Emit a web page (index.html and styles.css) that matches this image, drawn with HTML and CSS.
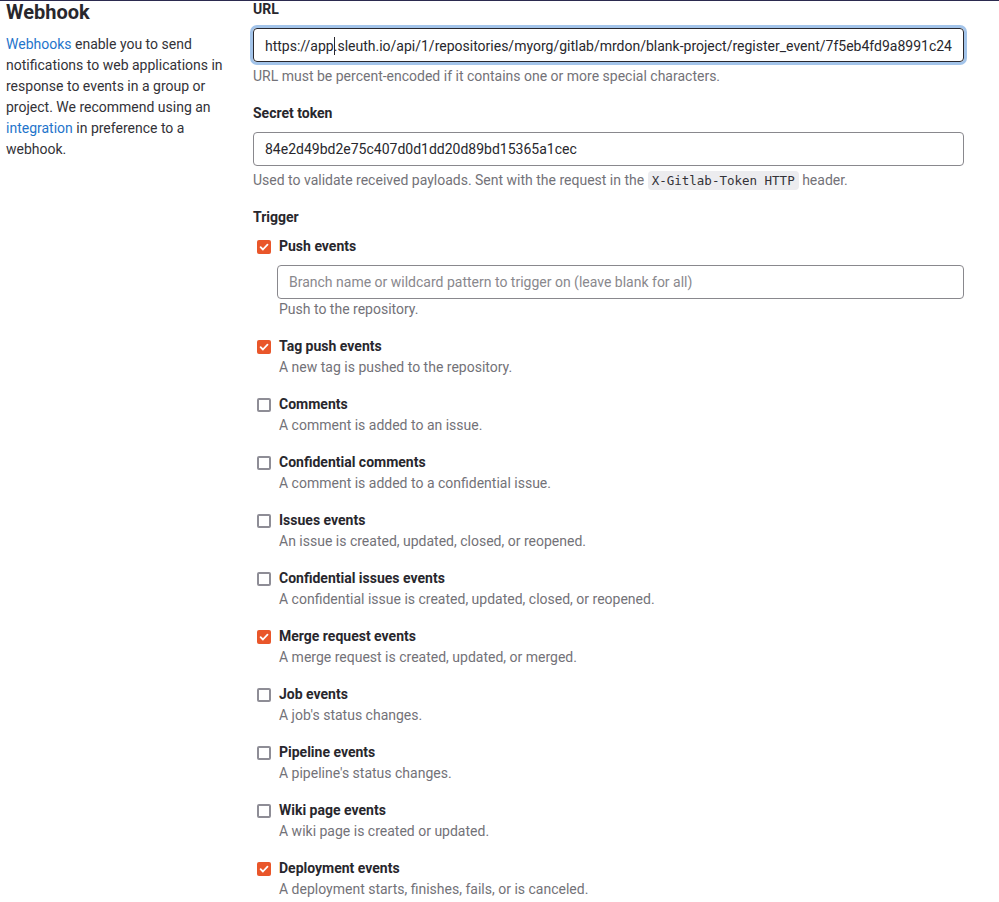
FILE: index.html
```html
<!DOCTYPE html>
<html lang="en">
<head>
<meta charset="utf-8">
<title>Webhook</title>
<link rel="stylesheet" href="styles.css">
</head>
<body>
<div class="topline"></div>
<main class="layout">
  <aside class="intro">
    <h2 class="intro-title">Webhook</h2>
    <p class="intro-text"><a href="#" class="link">Webhooks</a> enable you to send notifications to web applications in response to events in a group or project. We recommend using an <a href="#" class="link">integration</a> in preference to a webhook.</p>
  </aside>
  <section class="form">
    <div class="group">
      <label class="label">URL</label>
      <div class="input input-focus">https://app<span class="caret"></span>.sleuth.io/api/1/repositories/myorg/gitlab/mrdon/blank-project/register_event/7f5eb4fd9a8991c24</div>
      <p class="help">URL must be percent-encoded if it contains one or more special characters.</p>
    </div>
    <div class="group">
      <label class="label">Secret token</label>
      <div class="input">84e2d49bd2e75c407d0d1dd20d89bd15365a1cec</div>
      <p class="help">Used to validate received payloads. Sent with the request in the <code class="code">X-Gitlab-Token HTTP</code> header.</p>
    </div>
    <div class="group">
      <label class="label">Trigger</label>
      <ul class="triggers">
        <li class="trigger">
          <span class="box checked"><svg viewBox="0 0 14 14" width="14" height="14"><path d="M3.6 7.2l2.3 2.3 4.6-4.8" fill="none" stroke="#fff" stroke-width="1.8" stroke-linecap="round" stroke-linejoin="round"/></svg></span>
          <div class="trigger-body">
            <div class="trigger-name">Push events</div>
            <div class="input input-branch placeholder">Branch name or wildcard pattern to trigger on (leave blank for all)</div>
            <div class="trigger-desc">Push to the repository.</div>
          </div>
        </li>
        <li class="trigger">
          <span class="box checked"><svg viewBox="0 0 14 14" width="14" height="14"><path d="M3.6 7.2l2.3 2.3 4.6-4.8" fill="none" stroke="#fff" stroke-width="1.8" stroke-linecap="round" stroke-linejoin="round"/></svg></span>
          <div class="trigger-body">
            <div class="trigger-name">Tag push events</div>
            <div class="trigger-desc">A new tag is pushed to the repository.</div>
          </div>
        </li>
        <li class="trigger">
          <span class="box"></span>
          <div class="trigger-body">
            <div class="trigger-name">Comments</div>
            <div class="trigger-desc">A comment is added to an issue.</div>
          </div>
        </li>
        <li class="trigger">
          <span class="box"></span>
          <div class="trigger-body">
            <div class="trigger-name">Confidential comments</div>
            <div class="trigger-desc">A comment is added to a confidential issue.</div>
          </div>
        </li>
        <li class="trigger">
          <span class="box"></span>
          <div class="trigger-body">
            <div class="trigger-name">Issues events</div>
            <div class="trigger-desc">An issue is created, updated, closed, or reopened.</div>
          </div>
        </li>
        <li class="trigger">
          <span class="box"></span>
          <div class="trigger-body">
            <div class="trigger-name">Confidential issues events</div>
            <div class="trigger-desc">A confidential issue is created, updated, closed, or reopened.</div>
          </div>
        </li>
        <li class="trigger">
          <span class="box checked"><svg viewBox="0 0 14 14" width="14" height="14"><path d="M3.6 7.2l2.3 2.3 4.6-4.8" fill="none" stroke="#fff" stroke-width="1.8" stroke-linecap="round" stroke-linejoin="round"/></svg></span>
          <div class="trigger-body">
            <div class="trigger-name">Merge request events</div>
            <div class="trigger-desc">A merge request is created, updated, or merged.</div>
          </div>
        </li>
        <li class="trigger">
          <span class="box"></span>
          <div class="trigger-body">
            <div class="trigger-name">Job events</div>
            <div class="trigger-desc">A job's status changes.</div>
          </div>
        </li>
        <li class="trigger">
          <span class="box"></span>
          <div class="trigger-body">
            <div class="trigger-name">Pipeline events</div>
            <div class="trigger-desc">A pipeline's status changes.</div>
          </div>
        </li>
        <li class="trigger">
          <span class="box"></span>
          <div class="trigger-body">
            <div class="trigger-name">Wiki page events</div>
            <div class="trigger-desc">A wiki page is created or updated.</div>
          </div>
        </li>
        <li class="trigger">
          <span class="box checked"><svg viewBox="0 0 14 14" width="14" height="14"><path d="M3.6 7.2l2.3 2.3 4.6-4.8" fill="none" stroke="#fff" stroke-width="1.8" stroke-linecap="round" stroke-linejoin="round"/></svg></span>
          <div class="trigger-body">
            <div class="trigger-name">Deployment events</div>
            <div class="trigger-desc">A deployment starts, finishes, fails, or is canceled.</div>
          </div>
        </li>
      </ul>
    </div>
  </section>
</main>
</body>
</html>
```
FILE: styles.css
```css
* { box-sizing: border-box; }
html, body { margin: 0; padding: 0; background: #fff; }
body {
  font-family: Roboto, "Liberation Sans", sans-serif;
  font-size: 14px;
  line-height: 21px;
  color: #333238;
  overflow: hidden;
}
.topline {
  position: fixed;
  top: 0; left: 0; right: 0;
  height: 1px;
  background: #2b2a4f;
  z-index: 5;
}
.layout {
  display: grid;
  grid-template-columns: 230px 711px;
  column-gap: 17px;
  padding-left: 6px;
  margin-top: -1px;
}
.intro-title {
  margin: 1px 0 10px;
  font-size: 20px;
  line-height: 24px;
  font-weight: 700;
  color: #28272d;
}
.intro-text { margin: 0; color: #333238; }
.link { color: #1f75cb; text-decoration: none; }
.group { margin-bottom: 16px; }
.label {
  display: block;
  font-weight: 700;
  margin-bottom: 8px;
  color: #28272d;
}
.input {
  height: 34px;
  border: 1px solid #89888d;
  border-radius: 4px;
  padding: 8px 11px;
  font-size: 14px;
  line-height: 16px;
  color: #28272d;
  white-space: nowrap;
  overflow: hidden;
}
.input-focus {
  border-color: #28272d;
  box-shadow: 0 0 0 3px #a3c4ea;
}
.caret {
  display: inline-block;
  width: 0;
  height: 18px;
  border-left: 1px solid #28272d;
  margin-right: -1px;
  vertical-align: -4px;
}
.help {
  margin: 4px 0 0;
  color: #737278;
}
.code {
  font-family: "DejaVu Sans Mono", "Liberation Mono", monospace;
  font-size: 12.5px;
  background: #ececef;
  border-radius: 4px;
  padding: 2px 4px;
  color: #333238;
}
.triggers { list-style: none; margin: 0; padding: 0; }
.trigger {
  display: flex;
  align-items: flex-start;
  margin-bottom: 16px;
}
.box {
  flex: none;
  width: 14px;
  height: 14px;
  margin: 4px 6px 0 4px;
  border: 2px solid #8e8d96;
  border-radius: 2px;
  background: #fff;
}
.box.checked {
  border: none;
  background: #e9562a;
}
.box svg { display: block; }
.trigger-body { flex: 1; min-width: 0; }
.trigger-name { font-weight: 700; color: #28272d; padding-left: 2px; }
.trigger-desc { color: #737278; padding-left: 2px; }
.input-branch {
  margin-top: 8px;
  height: 34px;
}
.placeholder { color: #89888d; }
```
